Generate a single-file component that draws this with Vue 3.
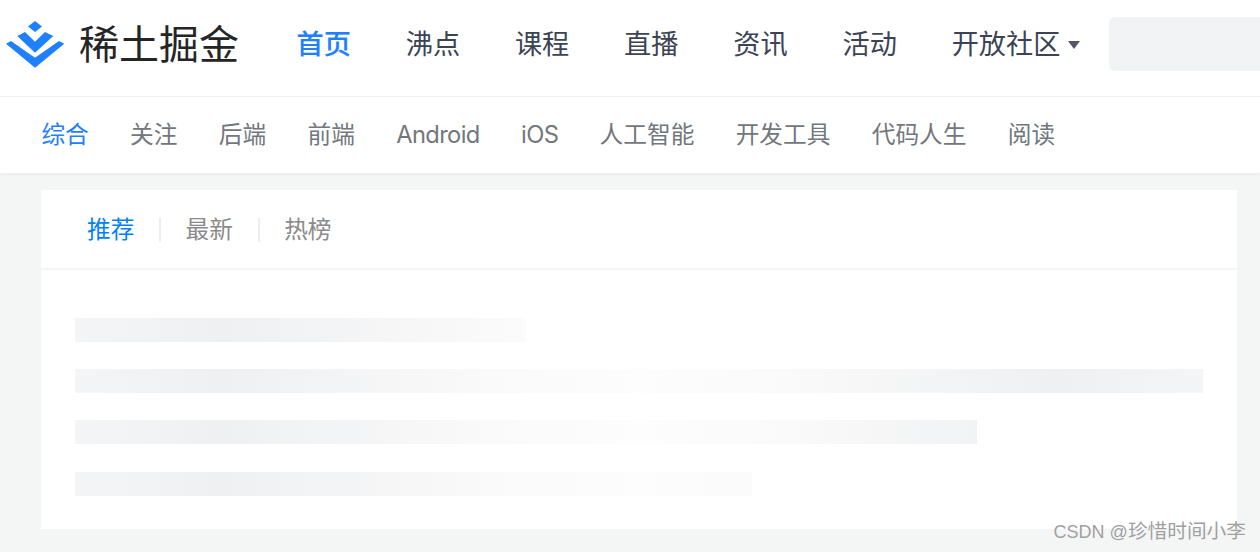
<template>
  <div class="page">
    <header class="top">
      <div class="main-bar">
        <a class="logo">
          <svg class="logo-mark" width="60" height="48" viewBox="0 0 60 48">
            <path d="M29 0 L36 5.5 L29 11 L22 5.5 Z" />
            <path d="M19 11 L29 20.7 L39 11 L47.3 15 L29 31.7 L11.3 15 Z" />
            <path d="M5 20 L29 36.7 L53 20 L58.3 22.7 L29 46.7 L0 22.7 Z" />
          </svg>
          <span class="logo-text">稀土掘金</span>
        </a>
        <nav class="main-nav">
          <a v-for="(item, i) in mainNav" :key="item" class="main-link" :class="{ active: i === 0 }">{{ item }}</a>
          <a class="main-link more">开放社区<i class="caret"></i></a>
        </nav>
        <div class="search"></div>
      </div>
      <nav class="sub-nav">
        <a
          v-for="(item, i) in subNav"
          :key="item"
          class="sub-link"
          :class="{ active: i === 0, latin: /^[A-Za-z]+$/.test(item) }"
        >{{ item }}</a>
      </nav>
    </header>

    <main class="card">
      <div class="tabs">
        <a v-for="(tab, i) in tabs" :key="tab" class="tab" :class="{ active: i === 0 }">{{ tab }}</a>
      </div>
      <div class="skeleton">
        <div v-for="w in rows" :key="w" class="bar" :style="{ width: w + 'px' }"></div>
      </div>
    </main>

    <span class="watermark"><span class="wm-name">CSDN @</span>珍惜时间小李</span>
  </div>
</template>

<script setup>
const mainNav = ['首页', '沸点', '课程', '直播', '资讯', '活动']
const subNav = ['综合', '关注', '后端', '前端', 'Android', 'iOS', '人工智能', '开发工具', '代码人生', '阅读']
const tabs = ['推荐', '最新', '热榜']
const rows = [451, 1128, 902, 677]
</script>

<style>
html,
body {
  margin: 0;
  overflow: hidden;
}
</style>

<style scoped>
.page {
  position: relative;
  height: 552px;
  overflow: hidden;
  background: #f4f5f5;
  font-family: Inter, "Noto Sans CJK SC", sans-serif;
}

.top {
  background: #fff;
  box-shadow: 0 1px 4px rgba(0, 0, 0, 0.06);
}

.main-bar {
  display: flex;
  align-items: center;
  height: 89px;
  padding-bottom: 7px;
  border-bottom: 1px solid #eff0f1;
}

.logo {
  display: flex;
  align-items: center;
  margin-left: 6px;
  width: 290.5px;
  flex: none;
}

.logo-mark {
  flex: none;
  fill: #1e80ff;
}

.logo-text {
  margin-left: 13px;
  font-size: 40px;
  line-height: 48px;
  color: #252525;
  white-space: nowrap;
}

.main-nav {
  display: flex;
  gap: 54.8px;
  flex: none;
}

.main-link {
  font-size: 27.2px;
  line-height: 40px;
  color: #3b4354;
  white-space: nowrap;
}

.main-link.active {
  color: #1e80ff;
  font-weight: 500;
  -webkit-text-stroke: 0.15px #1e80ff;
}

.more {
  display: flex;
  align-items: center;
}

.caret {
  margin-left: 7.5px;
  margin-top: 1px;
  border-left: 6.5px solid transparent;
  border-right: 6.5px solid transparent;
  border-top: 8px solid #515767;
}

.search {
  flex: none;
  width: 200px;
  height: 54px;
  margin: 0 0 2px 29.5px;
  background: #f2f3f5;
  border-radius: 6px;
}

.sub-nav {
  display: flex;
  gap: 41.3px;
  align-items: center;
  height: 76px;
  padding-left: 41.4px;
}

.sub-link {
  font-size: 23.7px;
  line-height: 32px;
  color: #71777c;
  white-space: nowrap;
}

.sub-link.latin {
  letter-spacing: -0.6px;
}

.sub-link.active {
  color: #1e80ff;
}

.card {
  margin: 17px 23px 0 41px;
  height: 339px;
  background: #fff;
}

.tabs {
  display: flex;
  align-items: center;
  height: 77px;
  padding: 1px 0 0 46px;
  border-bottom: 2px solid #f4f4f4;
}

.tab {
  font-size: 23.7px;
  line-height: 24px;
  color: #8a8a8a;
  padding-right: 25px;
  margin-right: 24.2px;
  border-right: 2px solid #ededed;
}

.tab:last-child {
  border-right: 0;
}

.tab.active {
  color: #007fff;
}

.skeleton {
  display: flex;
  flex-direction: column;
  gap: 27.2px;
  padding: 48px 34px 0;
}

.bar {
  height: 24px;
  background-image: linear-gradient(90deg, #f4f5f6 0%, #eff0f2 13%, #fbfbfb 40%, #fdfdfd 50%, #fbfbfb 60%, #eff0f2 87%, #f4f5f6 100%);
  background-size: 1128px 100%;
  background-repeat: no-repeat;
}

.watermark {
  position: absolute;
  right: 14px;
  bottom: 8px;
  font-family: "Liberation Sans", "Noto Sans CJK SC", sans-serif;
  font-size: 19.7px;
  line-height: 24px;
  color: #a0a0a0;
  text-shadow: 0 0 1px #fff;
  white-space: nowrap;
}

.wm-name {
  font-size: 18px;
}
</style>
